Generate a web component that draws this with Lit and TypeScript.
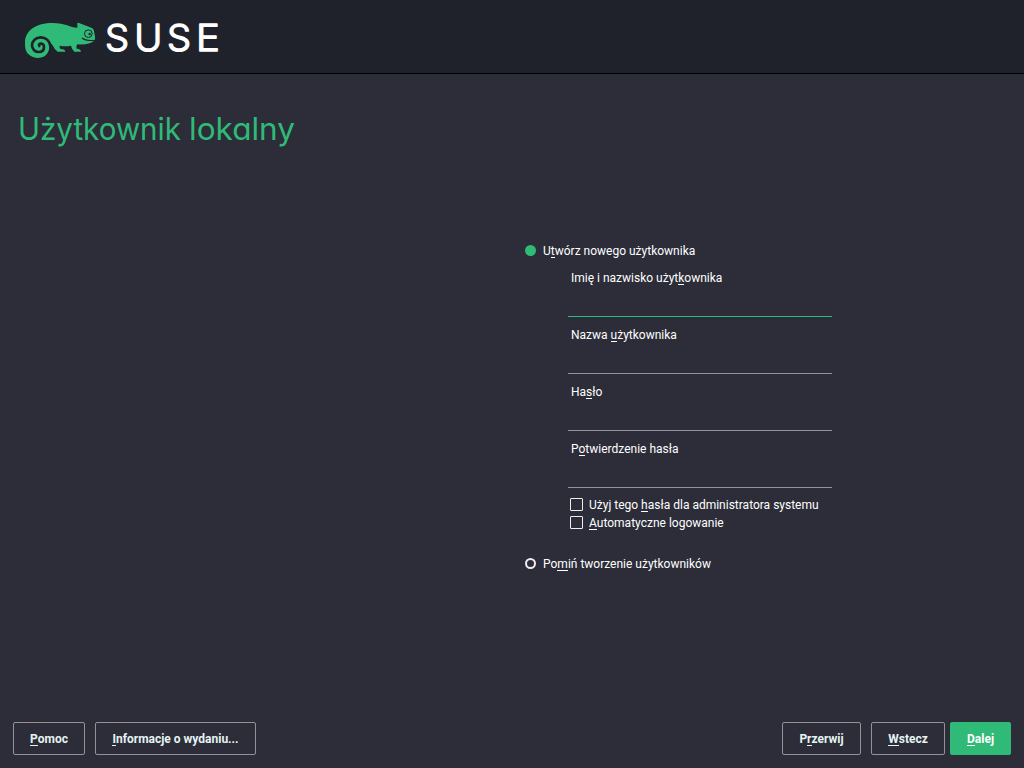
import { LitElement, html, css } from "lit";
import { customElement } from "lit/decorators.js";

const label = (text: string) => {
  const [before, key, after] = text.split("_");
  return html`${before}<span class="key">${key}</span>${after}`;
};

const FIELDS = [
  "Imię i nazwisko użyt_k_ownika",
  "Nazwa _u_żytkownika",
  "Ha_s_ło",
  "P_o_twierdzenie hasła",
];

@customElement("app-root")
export class AppRoot extends LitElement {
  static styles = css`
    :host {
      display: flex;
      flex-direction: column;
      width: 1024px;
      height: 768px;
      overflow: hidden;
      background: #2c2d38;
      color: #fff;
      font: 12px/16px Roboto, sans-serif;
    }
    * { box-sizing: border-box; }
    header { height: 74px; flex: none; background: #20222b; border-bottom: 1px solid #000; }
    .logo { display: block; }
    .wordmark { font: 300 37px Inter, sans-serif; fill: #fff; stroke: #fff; stroke-width: 1.4; stroke-linejoin: round; }
    h1 {
      margin: 34px 0 0 18px;
      height: 44px;
      font: 400 31px/42px Inter, sans-serif;
      font-feature-settings: "cv11";
      color: #30ba78;
      white-space: nowrap;
    }
    .title { display: block; overflow: visible; }
    .titletext { fill: #30ba78; }
    main { flex: 1; padding: 91px 0 0 525px; }
    .option { display: flex; align-items: flex-start; gap: 7px; height: 16px; white-space: nowrap; }
    .radio { width: 11px; height: 11px; margin-top: 2px; border-radius: 50%; border: 2px solid #eee; }
    .radio.on { background: #30ba78; border-color: #30ba78; }
    .key { position: relative; }
    .key::after { content: ""; position: absolute; left: 0; right: 0; bottom: 0; height: 1px; background: currentColor; }
    .fields { margin: 11px 0 0 43px; width: 264px; }
    .field { height: 57px; }
    .field .name { padding-left: 3px; display: block; }
    .field .input { height: 31px; border-bottom: 1px solid #939395; }
    .field .input.focus { border-color: #30ba78; }
    .checks { margin: -2px 0 0 45px; }
    .check { display: flex; align-items: center; gap: 6px; height: 18px; white-space: nowrap; }
    .box { width: 13px; height: 13px; margin-bottom: 1px; border: 1px solid #eee; border-radius: 1px; }
    .skip { margin-top: 24px; }
    footer { display: flex; height: 46px; flex: none; padding: 0 13px; align-items: flex-start; }
    .btn {
      height: 33px; display: flex; align-items: center; justify-content: center;
      border: 1px solid #939395; border-radius: 2px; color: #e5f3f3; font-weight: 700; white-space: pre;
    }
    .help { width: 72px; margin-right: 10px; }
    .notes { width: 161px; margin-right: auto; }
    .abort { width: 79px; margin-right: 10px; }
    .back { width: 74px; margin-right: 5px; }
    .next { width: 61px; background: #30ba78; border-color: #30ba78; color: #fff; }
  `;

  render() {
    return html`
      <header>
        <svg class="logo" width="240" height="73" viewBox="0 0 240 73">
          <g transform="translate(15 10) scale(.33333)">
            <path fill="#30ba78" d="M187 53V40Q187 37 192 39L225 52Q236 56 237 63L240 80V89Q228 105 187 103Q182 108 185 116Q197 116 198 125H178Q171 119 168 107Q151 111 134 107Q132 119 145 118Q151 120 151 125H128Q118 119 114 107Q110 99 102 98Q105 119 97 130C87 148 56 148 40 132C31 123 30 111 30 98C30 61 64 39 113 39C151 39 169 54 187 53Z"/>
            <path fill="none" stroke="#20222b" stroke-width="8" stroke-linecap="round" stroke-linejoin="round" d="M107 110C104 92 92 82 77 82C62 82 51 93 51 106C51 118 61 126 71 126C82 126 87 119 87 111C87 104 82 100 76 101C72 102 71 105 73 108"/>
            <circle cx="220" cy="71" r="11.5" fill="none" stroke="#20222b" stroke-width="3"/>
            <path fill="none" stroke="#20222b" stroke-width="3.2" d="M201 84Q213 94 239 91"/>
            <circle cx="224" cy="72" r="3.5" fill="#20222b"/>
          </g>
          <g class="wordmark" transform="translate(0 51)">
            <text transform="translate(105.1 0) scale(1.03 1)">S</text>
            <text transform="translate(134.2 0) scale(1.03 1)">U</text>
            <text transform="translate(167 0) scale(1.03 1)">S</text>
            <text transform="translate(196 0) scale(1.08 1)">E</text>
          </g>
        </svg>
      </header>
      <h1>
        <svg class="title" width="290" height="44">
          <text class="titletext" x="0" y="31.5" textLength="163" lengthAdjust="spacingAndGlyphs">Użytkownik</text>
          <text class="titletext" x="171" y="31.5" textLength="106" lengthAdjust="spacingAndGlyphs">lokalny</text>
        </svg>
      </h1>
      <main>
        <div class="option"><span class="radio on"></span><span>${label("U_t_wórz nowego użytkownika")}</span></div>
        <div class="fields">
          ${FIELDS.map((f, i) => html`<div class="field"><span class="name">${label(f)}</span><div class="input ${i ? "" : "focus"}"></div></div>`)}
        </div>
        <div class="checks">
          <div class="check"><span class="box"></span><span>${label("Użyj tego _h_asła dla administratora systemu")}</span></div>
          <div class="check"><span class="box"></span><span>${label("_A_utomatyczne logowanie")}</span></div>
        </div>
        <div class="option skip"><span class="radio"></span><span>${label("Po_m_iń tworzenie użytkowników")}</span></div>
      </main>
      <footer>
        <div class="btn help"><span>${label("_P_omoc")}</span></div>
        <div class="btn notes"><span>${label("_I_nformacje o wydaniu...")}</span></div>
        <div class="btn abort"><span>${label("P_r_zerwij")}</span></div>
        <div class="btn back"><span>${label("_W_stecz")}</span></div>
        <div class="btn next"><span>${label("_D_alej")}</span></div>
      </footer>
    `;
  }
}
